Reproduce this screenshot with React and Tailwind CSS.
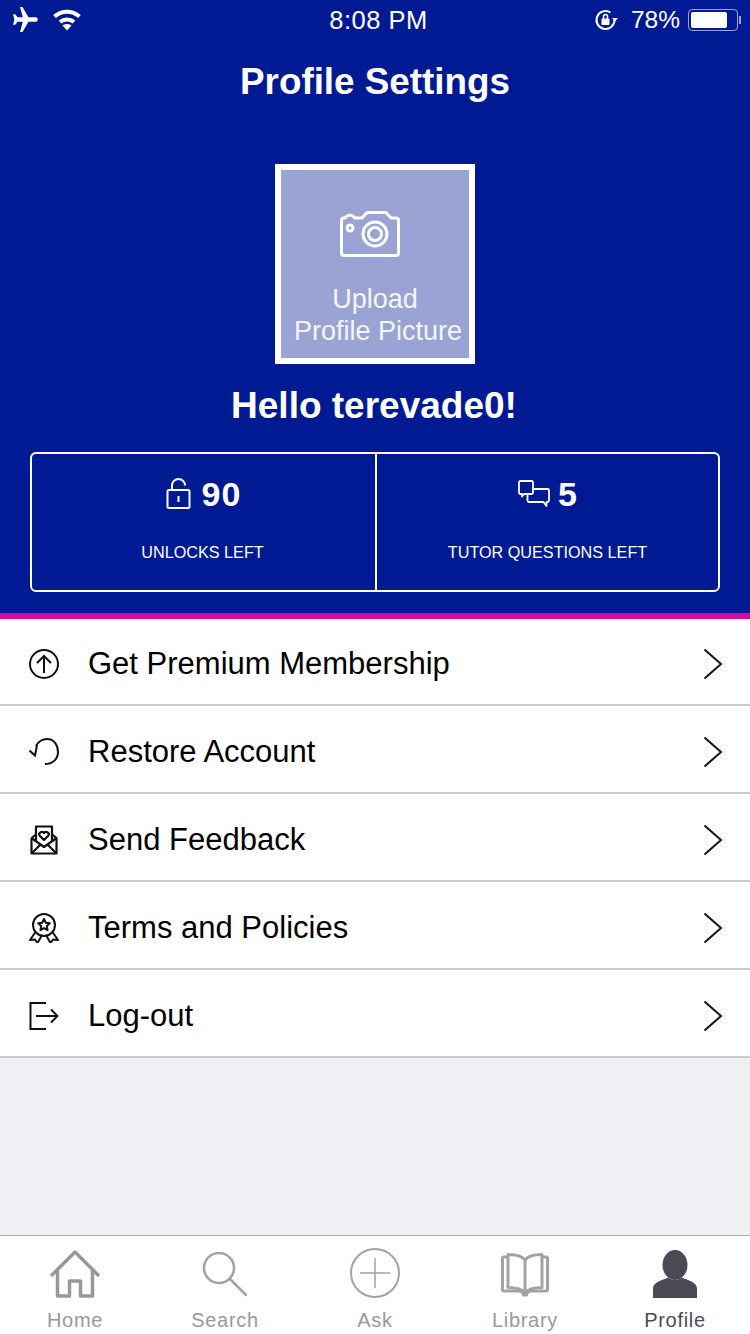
const sans = { fontFamily: '"Liberation Sans", Arial, sans-serif' };

function PlaneIcon() {
  return (
    <svg width="30" height="26" viewBox="0 0 30 26" fill="white">
      <path d="M9 0h2.500l6 10.300h7.500c2.400 0 2.400 4.400 0 4.400h-7.500l-6 10.300h-2.500l2.800-10.300h-5.300l-2.300 3h-2.200l1.400-5.200-1.400-5.200h2.200l2.300 3h5.300z" />
    </svg>
  );
}

function WifiIcon() {
  return (
    <svg width="28" height="22" viewBox="0 0 28 22" fill="none" stroke="white" strokeWidth="4">
      <path d="M1.500 7.500c7.500-6.500 17.500-6.500 25 0" />
      <path d="M7 13c4-3.500 10-3.500 14 0" />
      <path d="M14 21.500l-4.500-5c2.500-2 6.500-2 9 0z" fill="white" stroke="none" />
    </svg>
  );
}

function LockRotateIcon() {
  return (
    <svg width="24" height="24" viewBox="0 0 24 24" fill="none" stroke="white" strokeWidth="2">
      <path d="M20.500 12a9 9 0 1 1-4-7.500" />
      <path d="M18 10l3 3.500 3-3.500z" fill="white" stroke="none" />
      <rect x="7.500" y="10.500" width="8" height="6.500" rx="1" fill="white" stroke="none" />
      <path d="M9.500 11V8.500a2 2 0 0 1 4 0V11" strokeWidth="1.500" />
    </svg>
  );
}

function CameraIcon() {
  return (
    <svg width="60" height="46" viewBox="0 0 60 46" fill="none" stroke="white" strokeWidth="3" strokeLinejoin="round">
      <path d="M1.500 9.500Q1.500 7 4 7H5Q10 1 15 7H22L27 1.500H46L51 7H56Q58.500 7 58.500 9.500V42Q58.500 44.500 56 44.500H4Q1.500 44.500 1.500 42Z" />
      <circle cx="35" cy="23" r="12" />
      <circle cx="35" cy="23" r="6.500" />
      <circle cx="10" cy="17" r="3" />
    </svg>
  );
}

function UnlockIcon() {
  return (
    <svg width="26" height="32" viewBox="0 0 26 32" fill="none" stroke="white" strokeWidth="2">
      <rect x="1.500" y="12" width="22" height="18" rx="1.500" />
      <path d="M6 12V7.500a6.500 6.500 0 0 1 13 0" />
      <path d="M12.500 18v6" />
    </svg>
  );
}

function ChatIcon() {
  return (
    <svg width="32" height="28" viewBox="0 0 32 28" fill="none" stroke="white" strokeWidth="1.800" strokeLinejoin="round">
      <path d="M2.500 1h11c1 0 1.500.5 1.500 1.500v10c0 1-.5 1.500-1.500 1.500H6l-2 2.500V14H2.500C1.500 14 1 13.500 1 12.500v-10C1 1.500 1.500 1 2.500 1z" />
      <path d="M15 9h14.500c1 0 1.500.5 1.500 1.500v10c0 1-.5 1.500-1.500 1.500h-1v4l-3-4H11c-1 0-1.500-.5-1.500-1.500V14" />
    </svg>
  );
}

function UpIcon() {
  return (
    <svg width="30" height="30" viewBox="0 0 30 30" fill="none" stroke="#111" strokeWidth="2">
      <circle cx="15" cy="15" r="14" />
      <path d="M15 24V7M8 14l7-7 7 7" />
    </svg>
  );
}

function RestoreIcon() {
  return (
    <svg width="30" height="30" viewBox="0 0 30 30" fill="none" stroke="#111" strokeWidth="2">
      <path d="M7 9C10 3.500 15 2 18 2C25 2 29 8 29 15C29 22 24 27 16 27" />
      <path d="M0.500 13.500L6 18.500L8 8" />
    </svg>
  );
}

function MailHeartIcon() {
  return (
    <svg width="30" height="30" viewBox="0 0 30 30" fill="none" stroke="#111" strokeWidth="2.200" strokeLinejoin="round">
      <path d="M2.500 13v15.500h25V13l-5-4M7.500 9l-5 4" />
      <path d="M7 17V1.500h16V17" />
      <path d="M2.500 13l12.500 9 12.500-9M2.500 28.500l9-9M27.500 28.500l-9-9" />
      <path d="M15 15l-4.500-4.500c-1.500-3 3-5 4.500-2.500 1.500-2.500 6-.5 4.500 2.500z" />
    </svg>
  );
}

function AwardIcon() {
  return (
    <svg width="30" height="30" viewBox="0 0 30 30" fill="none" stroke="#111" strokeWidth="2" strokeLinejoin="round">
      <circle cx="15" cy="12" r="11" />
      <path d="M15 6l1.800 3.800 4 .5-3 2.800.8 4-3.600-2-3.600 2 .8-4-3-2.800 4-.5z" />
      <path d="M6.500 19L1 27l5-.5 2.500 3.500 4-7" />
      <path d="M23.500 19l5.500 8-5-.5-2.500 3.500-4-7" />
    </svg>
  );
}

function LogoutIcon() {
  return (
    <svg width="30" height="28" viewBox="0 0 30 28" fill="none" stroke="#111" strokeWidth="2">
      <path d="M17 1H1.500v26H17" />
      <path d="M7 14h21.500M22 7.500L28.500 14L22 20.500" />
    </svg>
  );
}

function ChevronIcon() {
  return (
    <svg width="20" height="32" viewBox="0 0 20 32" fill="none" stroke="#111" strokeWidth="2">
      <path d="M1.500 1.500L18 16L1.500 30.500" />
    </svg>
  );
}

function HomeIcon() {
  return (
    <svg width="50" height="48" viewBox="0 0 50 48" fill="none" stroke="#999" strokeWidth="3.500" strokeLinejoin="round">
      <path d="M1 26L25 2l24 24" />
      <path d="M7.500 20v26h12V31h11v15h12V20" />
    </svg>
  );
}

function SearchIcon() {
  return (
    <svg width="46" height="46" viewBox="0 0 46 46" fill="none" stroke="#a3a3a3" strokeWidth="2.500">
      <circle cx="17" cy="16" r="15" />
      <path d="M28 27l16 16" strokeLinecap="round" />
    </svg>
  );
}

function AskIcon() {
  return (
    <svg width="50" height="50" viewBox="0 0 50 50" fill="none" stroke="#a3a3a3" strokeWidth="2">
      <circle cx="25" cy="25" r="24" />
      <path d="M25 10v30M10 25h30" strokeWidth="1.500" />
    </svg>
  );
}

function BookIcon() {
  return (
    <svg width="48" height="46" viewBox="0 0 48 46" fill="none" stroke="#a3a3a3" strokeWidth="3" strokeLinejoin="round">
      <path d="M6 5H3c-1 0-1.500.5-1.500 1.500v31c0 1 .5 1.500 1.500 1.500h15c2.500 0 4 1 4.500 4h3c.5-3 2-4 4.500-4h15c1 0 1.500-.5 1.500-1.500v-31c0-1-.5-1.500-1.500-1.500h-3" />
      <path d="M24 8c-3-4-8-5.500-17-5.500v33c9 0 14 1.500 17 5.500 3-4 8-5.500 17-5.500V2.500c-9 0-14 1.500-17 5.500zM24 8v33" />
    </svg>
  );
}

function PersonIcon() {
  return (
    <svg width="44" height="48" viewBox="0 0 44 48" fill="#4a4a55">
      <ellipse cx="22" cy="15" rx="12.500" ry="15" />
      <path d="M0 48V39c0-5 4-7 9-9 2.500-1 5-1.500 6-2.500 4 3 10 3 14 0 1 1 3.500 1.500 6 2.500 5 2 9 4 9 9v9z" />
    </svg>
  );
}

const rows = [
  { label: "Get Premium Membership", icon: <UpIcon /> },
  { label: "Restore Account", icon: <RestoreIcon /> },
  { label: "Send Feedback", icon: <MailHeartIcon /> },
  { label: "Terms and Policies", icon: <AwardIcon /> },
  { label: "Log-out", icon: <LogoutIcon /> },
];

const tabs = [
  { label: "Home", icon: <HomeIcon /> },
  { label: "Search", icon: <SearchIcon /> },
  { label: "Ask", icon: <AskIcon /> },
  { label: "Library", icon: <BookIcon /> },
  { label: "Profile", icon: <PersonIcon />, active: true },
];

export default function App() {
  return (
    <div className="w-[750px] h-[1334px] flex flex-col bg-[#efeff4] overflow-hidden" style={sans}>
      {/* HEADER */}
      <div className="h-[613px] bg-[#001a94] text-white flex flex-col items-center shrink-0">
        <div className="w-full h-[40px] grid grid-cols-3 items-center pl-[11px] pr-[9px]">
          <div className="flex items-center gap-[12px]">
            <PlaneIcon />
            <WifiIcon />
          </div>
          <div className="pl-[5px] text-center text-[25.5px] tracking-[0.5px]">8:08 PM</div>
          <div className="flex items-center justify-end">
            <LockRotateIcon />
            <span className="text-[24.5px] ml-[13px] mr-[8px]">78%</span>
            <div className="w-[50px] h-[22px] border border-white/60 rounded-[4px] p-[2px]">
              <div className="w-[36px] h-full bg-white rounded-[2px]" />
            </div>
            <div className="w-[2px] h-[8px] bg-white/60 ml-[1px]" />
          </div>
        </div>

        <h1 className="mt-[21px] text-[36.8px] leading-[42px] font-bold">Profile Settings</h1>

        <div className="mt-[61px] w-[200px] h-[200px] border-[6px] border-white bg-[#99a3d4] flex flex-col items-center">
          <div className="mt-[41px] h-[46px] pr-[10px]">
            <CameraIcon />
          </div>
          <div className="mt-[26px] pl-[6px] text-[27px] leading-[32px] text-center text-white/90 whitespace-nowrap">
            <div className="pr-[6px]">Upload</div>
            <div>Profile Picture</div>
          </div>
        </div>

        <div className="mt-[21px] pr-[2px] text-[37px] leading-[42px] font-bold">Hello terevade0!</div>

        <div className="mt-[25px] w-[690px] h-[140px] border-2 border-white rounded-[6px] flex">
          <div className="w-[345px] border-r-2 border-white flex flex-col items-center">
            <div className="mt-[22px] h-[36px] flex items-center gap-[10px]">
              <UnlockIcon />
              <span className="text-[34px] font-bold tracking-[1px]">90</span>
            </div>
            <div className="mt-[30px] pr-[2px] text-[16.2px] leading-[20px]">UNLOCKS LEFT</div>
          </div>
          <div className="flex-1 flex flex-col items-center">
            <div className="mt-[22px] h-[36px] flex items-center gap-[8px]">
              <ChatIcon />
              <span className="text-[34px] font-bold">5</span>
            </div>
            <div className="mt-[30px] text-[16.2px] leading-[20px]">TUTOR QUESTIONS LEFT</div>
          </div>
        </div>
      </div>
      <div className="h-[6px] bg-[#db0a96] shrink-0" />

      {/* MENU */}
      <div className="bg-white shrink-0">
        {rows.map((row, i) => (
          <div
            key={row.label}
            className={`flex items-center pl-[29px] pr-[27px] pt-[5px] border-b-2 border-[#cccccc] ${i === 0 ? "h-[87px]" : "h-[88px]"}`}
          >
            <div className="w-[30px] h-[30px] flex items-center justify-center">{row.icon}</div>
            <span className="ml-[29px] flex-1 text-[31px] leading-[36px] text-black">{row.label}</span>
            <ChevronIcon />
          </div>
        ))}
      </div>

      <div className="flex-1" />

      {/* TAB BAR */}
      <div className="h-[99px] bg-white border-t border-[#aaaaaa] grid grid-cols-5 shrink-0">
        {tabs.map((tab) => (
          <div key={tab.label} className="flex flex-col items-center">
            <div className="h-[50px] mt-[12px] flex items-end justify-center">{tab.icon}</div>
            <span
              className={`mt-[10px] text-[20px] leading-[24px] tracking-[0.7px] ${tab.active ? "text-[#4a4a55]" : "text-[#999999]"}`}
            >
              {tab.label}
            </span>
          </div>
        ))}
      </div>
    </div>
  );
}
